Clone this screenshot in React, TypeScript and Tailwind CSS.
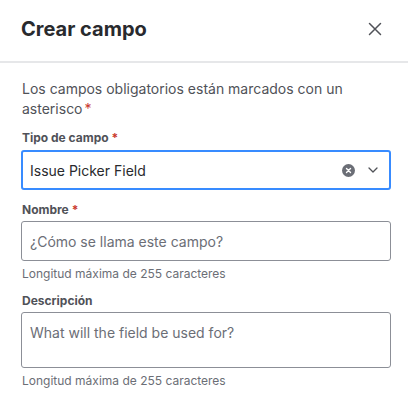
import React from "react";

export default function App() {
  return (
    <div
      className="w-[408px] h-[413px] bg-white overflow-hidden"
      style={{ fontFamily: "Inter, 'Noto Sans', sans-serif" }}
    >
      <div className="h-[63px] flex items-center justify-between pl-[21px] pr-[17px] border-b-2 border-[#e6e7e9]">
        <h1 className="text-[20px] leading-[24px] font-bold text-[#292a2e] -mt-[4px]">
          Crear campo
        </h1>
        <button className="w-[32px] h-[32px] flex items-center justify-center -mt-[4px]">
          <svg width="14" height="14" viewBox="0 0 14 14" fill="none">
            <path d="M1.5 1.5 L12.5 12.5 M12.5 1.5 L1.5 12.5" stroke="#505258" strokeWidth="1.5" strokeLinecap="round" />
          </svg>
        </button>
      </div>
      <div className="pl-[21px] pr-[17px] pt-[16px]">
        <p className="text-[14px] leading-[20px] text-[#505258] pl-px">
          Los campos obligatorios están marcados con un asterisco
          <span className="text-[#c9372c] ml-[2px]">*</span>
        </p>

        <label className="block mt-[11px] text-[12px] leading-[16px] font-bold text-[#505258] pl-px">
          Tipo de campo<span className="text-[#c9372c] ml-[3px]">*</span>
        </label>
        <div className="mt-[4px] h-[40px] rounded-[3px] border-2 border-[#388bff] flex items-center pl-[7px] pr-[11px]">
          <span className="flex-1 text-[14px] text-[#292a2e]">Issue Picker Field</span>
          <svg width="13" height="13" viewBox="0 0 13 13" className="mr-[13px]">
            <circle cx="6.5" cy="6.5" r="6.5" fill="#6b6e76" />
            <path d="M4.5 4.5 L8.5 8.5 M8.5 4.5 L4.5 8.5" stroke="white" strokeWidth="1.4" strokeLinecap="round" />
          </svg>
          <svg width="10" height="6" viewBox="0 0 10 6" fill="none">
            <path d="M1 1 L5 5 L9 1" stroke="#505258" strokeWidth="1.3" strokeLinecap="round" strokeLinejoin="round" />
          </svg>
        </div>

        <label className="block mt-[12px] text-[12px] leading-[16px] font-bold text-[#505258] pl-px">
          Nombre<span className="text-[#c9372c] ml-[3px]">*</span>
        </label>
        <div className="mt-[3px] h-[40px] rounded-[3px] border border-[#8c8f97] flex items-center px-[8px]">
          <span className="text-[14px] text-[#6b6e76]">¿Cómo se llama este campo?</span>
        </div>
        <p className="mt-[5px] text-[12px] leading-[16px] text-[#6b6e76] pl-px">
          Longitud máxima de 255 caracteres
        </p>

        <label className="block mt-[11px] text-[12px] leading-[16px] font-bold text-[#505258] pl-px">
          Descripción
        </label>
        <div className="mt-[3px] h-[56px] rounded-[3px] border border-[#8c8f97] px-[8px] pt-[7px]">
          <span className="text-[14px] leading-[20px] text-[#6b6e76]">What will the field be used for?</span>
        </div>
        <p className="mt-[5px] text-[12px] leading-[16px] text-[#6b6e76] pl-px">
          Longitud máxima de 255 caracteres
        </p>
      </div>
    </div>
  );
}
